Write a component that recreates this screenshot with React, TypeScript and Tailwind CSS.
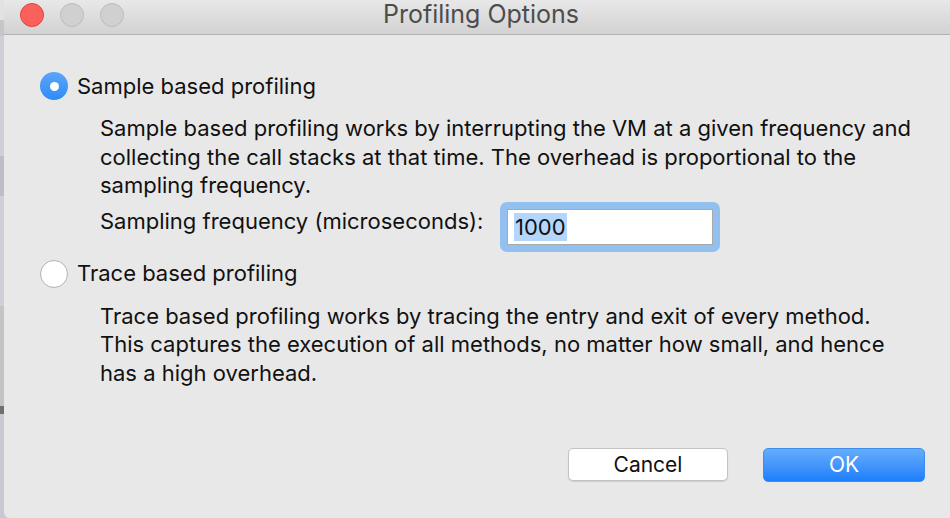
import React from 'react'

const font = { fontFamily: 'Inter, "Liberation Sans", sans-serif' }

function Radio({ checked }: { checked: boolean }) {
  if (checked) {
    return (
      <div className="w-[28px] h-[28px] rounded-full bg-gradient-to-b from-[#5aa6fa] to-[#2f8bf5] flex items-center justify-center shrink-0">
        <div className="w-[9px] h-[9px] rounded-full bg-white" />
      </div>
    )
  }
  return <div className="w-[28px] h-[28px] rounded-full bg-white border border-[#b3b3b3] shrink-0" />
}

const sampleLines = [
  'Sample based profiling works by interrupting the VM at a given frequency and',
  'collecting the call stacks at that time. The overhead is proportional to the',
  'sampling frequency.',
]

const traceLines = [
  'Trace based profiling works by tracing the entry and exit of every method.',
  'This captures the execution of all methods, no matter how small, and hence',
  'has a high overhead.',
]

export default function App() {
  return (
    <div className="w-[950px] h-[518px] flex bg-[#c9c9d1] overflow-hidden" style={font}>
      {/* window behind, peeking out on the left */}
      <div className="w-[4px] flex flex-col">
        <div className="h-[20px] bg-[#e2e2e2]" />
        <div className="h-[16px] bg-[#c6c6c6]" />
        <div className="h-[120px] bg-[#cfcfd7]" />
        <div className="h-[40px] bg-[#bdbdc6]" />
        <div className="h-[110px] bg-[#cfcfd7]" />
        <div className="h-[100px] bg-[#c4c4c4]" />
        <div className="h-[8px] bg-[#6f6f6f]" />
        <div className="flex-1 bg-[#c9c9d3]" />
      </div>

      <div className="flex-1 flex flex-col bg-[#e8e8e8] rounded-bl-[6px]">
        {/* title bar */}
        <div className="h-[35px] shrink-0 relative flex items-center justify-center bg-gradient-to-b from-[#e8e8e8] to-[#d2d2d2] border-b border-[#b1b1b1]">
          <div className="absolute left-[16px] top-[3px] flex gap-[16px]">
            <div className="w-[24px] h-[24px] rounded-full bg-[#fc605c] border border-[#e0443e]" />
            <div className="w-[24px] h-[24px] rounded-full bg-[#d0d0d0] border border-[#bcbcbc]" />
            <div className="w-[24px] h-[24px] rounded-full bg-[#d0d0d0] border border-[#bcbcbc]" />
          </div>
          <span className="text-[25px] text-[#4d4d4d] -mt-[4px] ml-[8px]">Profiling Options</span>
        </div>

        <div className="flex-1 flex flex-col pl-[36px] pr-[20px] text-[#111] text-[22px]">
          <label className="flex items-center gap-[9px] mt-[37px] h-[28px]">
            <Radio checked />
            <span>Sample based profiling</span>
          </label>

          <div className="pl-[60px] mt-[14px] flex flex-col leading-[28.5px]">
            {sampleLines.map((l) => (
              <span key={l}>{l}</span>
            ))}
          </div>

          <div className="pl-[60px] mt-[2px] flex items-center h-[50px]">
            <span className="w-[400px] -mt-[10px]">Sampling frequency (microseconds):</span>
            <div className="w-[220px] h-[50px] rounded-[7px] bg-[#94c0ef] p-[7px]">
              <div className="h-full bg-white border border-[#a9a9a9] flex items-center pl-[6px]">
                <span className="bg-[#b4d6fc] leading-[28px] px-[1px]">1000</span>
              </div>
            </div>
          </div>

          <label className="flex items-center gap-[9px] mt-[8px] h-[28px]">
            <Radio checked={false} />
            <span>Trace based profiling</span>
          </label>

          <div className="pl-[60px] mt-[14px] flex flex-col leading-[28.5px]">
            {traceLines.map((l) => (
              <span key={l}>{l}</span>
            ))}
          </div>

          <div className="mt-auto mb-[36px] flex justify-end gap-[35px] pr-[5px] text-[21px]">
            <button className="w-[160px] h-[33px] rounded-[5px] bg-white border border-[#c3c3c3] shadow-[0_1px_1px_rgba(0,0,0,0.12)] text-[#111]">
              Cancel
            </button>
            <button className="w-[162px] h-[34px] rounded-[5px] bg-gradient-to-b from-[#66adfb] to-[#1a7efb] text-white border border-[#3e8ef2]">
              OK
            </button>
          </div>
        </div>
      </div>
    </div>
  )
}
